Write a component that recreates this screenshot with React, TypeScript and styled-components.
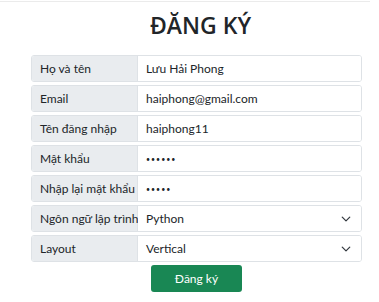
import React from 'react';
import styled, { createGlobalStyle } from 'styled-components';

const GlobalStyle = createGlobalStyle`
    body {
        margin: 0;
        background: #ffffff;
        font-family: Lato, "Liberation Sans", sans-serif;
        color: #212529;
    }
`;

const Page = styled.div`
    margin-top: 1px;
    border-top: 1px solid #ebebeb;
    width: 370px;
    padding: 0 0 0 31px;
    box-sizing: border-box;
`;

const Form = styled.form`
    width: 331px;
    display: flex;
    flex-direction: column;
    gap: 3px;
`;

const Title = styled.h2`
    margin: 7px 0 0;
    height: 46px;
    text-align: center;
    font-family: "Open Sans", sans-serif;
    font-size: 23px;
    font-weight: 600;
    line-height: 32px;
    color: #212529;
`;

const Group = styled.div`
    display: flex;
    height: 27px;
    border: 1px solid #dee2e6;
    border-radius: 3px;
    box-sizing: border-box;
    overflow: hidden;
`;

const Label = styled.span`
    width: 106px;
    flex-shrink: 0;
    display: flex;
    align-items: center;
    padding-left: 8px;
    box-sizing: border-box;
    background: #e9ecef;
    border-right: 1px solid #dee2e6;
    font-size: 12px;
    color: #212529;
    white-space: nowrap;
`;

const Field = styled.div<{ $secret?: boolean }>`
    flex: 1;
    display: flex;
    align-items: center;
    justify-content: space-between;
    padding: 0 10px 0 8px;
    font-size: ${({ $secret }) => ($secret ? '7px' : '12px')};
    letter-spacing: ${({ $secret }) => ($secret ? '1px' : '0')};
    color: #212529;
    background: #ffffff;
`;

const Chevron = () => (
    <svg width="10" height="10" viewBox="0 0 16 16" fill="none">
        <path d="M2 5l6 6 6-6" stroke="#343a40" strokeWidth="2" strokeLinecap="round" strokeLinejoin="round" />
    </svg>
);

const Submit = styled.button`
    align-self: center;
    width: 91px;
    height: 27px;
    border: none;
    border-radius: 3px;
    background: #198754;
    color: #ffffff;
    font-family: inherit;
    font-size: 12px;
`;

const rows: { label: string; value: string; secret?: boolean; select?: boolean }[] = [
    { label: 'Họ và tên', value: 'Lưu Hải Phong' },
    { label: 'Email', value: 'haiphong@gmail.com' },
    { label: 'Tên đăng nhập', value: 'haiphong11' },
    { label: 'Mật khẩu', value: '••••••', secret: true },
    { label: 'Nhập lại mật khẩu', value: '•••••', secret: true },
    { label: 'Ngôn ngữ lập trình', value: 'Python', select: true },
    { label: 'Layout', value: 'Vertical', select: true },
];

export default function App() {
    return (
        <>
            <GlobalStyle />
            <Page>
                <Title>ĐĂNG KÝ</Title>
                <Form onSubmit={(e) => e.preventDefault()}>
                    {rows.map((r) => (
                        <Group key={r.label}>
                            <Label>{r.label}</Label>
                            <Field $secret={r.secret}>
                                <span>{r.value}</span>
                                {r.select && <Chevron />}
                            </Field>
                        </Group>
                    ))}
                    <Submit type="submit">Đăng ký</Submit>
                </Form>
            </Page>
        </>
    );
}
